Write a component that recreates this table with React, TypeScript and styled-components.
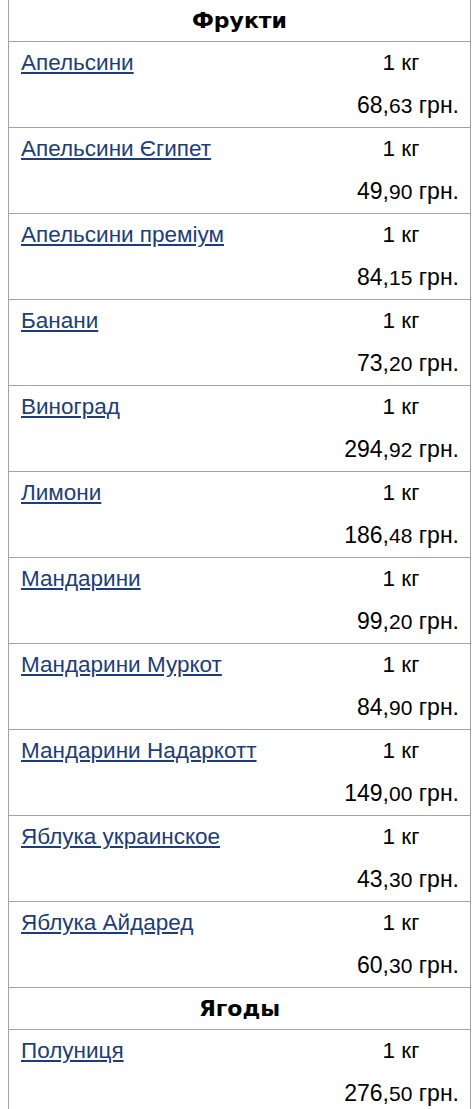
import React from 'react';
import styled, { createGlobalStyle } from 'styled-components';

const GlobalStyle = createGlobalStyle`
    body {
        margin: 0;
        background: #fff;
        font-family: 'Liberation Sans', Arial, sans-serif;
        color: #000;
    }
`;

const Page = styled.div`
    margin: -1px 0 0 8px;
    width: 463px;
    border: 1px solid #a3a3a3;
    border-bottom: none;
    box-sizing: border-box;
`;

const SectionTitle = styled.div`
    height: 42px;
    display: flex;
    align-items: center;
    justify-content: center;
    border-bottom: 1px solid #a3a3a3;
    font-family: 'DejaVu Sans', Verdana, sans-serif;
    font-weight: bold;
    font-size: 22px;
    box-sizing: border-box;
`;

const Item = styled.div`
    display: grid;
    grid-template-columns: 1fr 116px;
    grid-template-rows: 26px 26px;
    row-gap: 16px;
    padding: 8px 11px 9px 12px;
    border-bottom: 1px solid #a3a3a3;
    font-size: 22.5px;
    line-height: 26px;
`;

const Name = styled.a`
    color: #1c3d7a;
    text-decoration: underline;
    text-underline-offset: 2px;
    justify-self: start;
    white-space: nowrap;
`;

const Unit = styled.span`
    text-align: center;
`;

const Price = styled.span`
    grid-column: 1 / 3;
    text-align: right;
    font-size: 23px;
`;

const Kop = styled.span`
    font-size: 21px;
`;

type Product = { name: string; price: string };

const fruits: Product[] = [
    { name: 'Апельсини', price: '68,63' },
    { name: 'Апельсини Єгипет', price: '49,90' },
    { name: 'Апельсини преміум', price: '84,15' },
    { name: 'Банани', price: '73,20' },
    { name: 'Виноград', price: '294,92' },
    { name: 'Лимони', price: '186,48' },
    { name: 'Мандарини', price: '99,20' },
    { name: 'Мандарини Муркот', price: '84,90' },
    { name: 'Мандарини Надаркотт', price: '149,00' },
    { name: 'Яблука украинское', price: '43,30' },
    { name: 'Яблука Айдаред', price: '60,30' },
];

const berries: Product[] = [{ name: 'Полуниця', price: '276,50' }];

const Row: React.FC<{ p: Product }> = ({ p }) => {
    const [whole, kop] = p.price.split(',');
    return (
        <Item>
            <Name href="#">{p.name}</Name>
            <Unit>1 кг</Unit>
            <Price>
                {whole},<Kop>{kop}</Kop> грн.
            </Price>
        </Item>
    );
};

const App: React.FC = () => {
    return (
        <>
            <GlobalStyle />
            <Page>
                <SectionTitle>Фрукти</SectionTitle>
                {fruits.map((p) => (
                    <Row key={p.name} p={p} />
                ))}
                <SectionTitle>Ягоды</SectionTitle>
                {berries.map((p) => (
                    <Row key={p.name} p={p} />
                ))}
            </Page>
        </>
    );
};

export default App;
